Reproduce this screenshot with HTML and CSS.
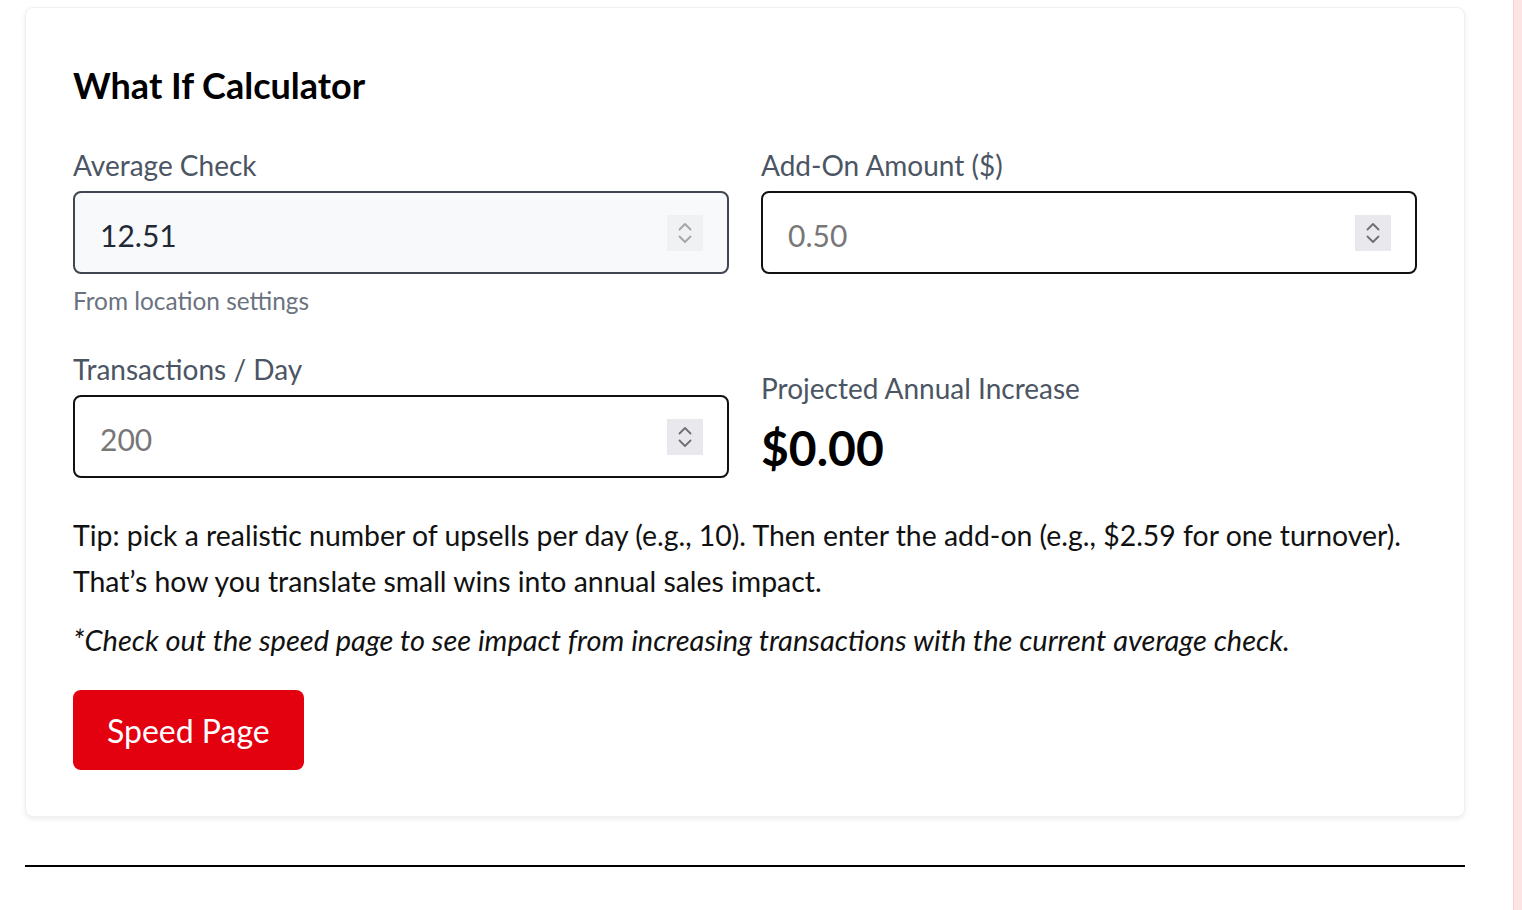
FILE: index.html
```html
<!DOCTYPE html>
<html lang="en">
<head>
<meta charset="utf-8">
<title>What If Calculator</title>
<link rel="stylesheet" href="styles.css">
</head>
<body>
<div class="layout">
  <main class="main">
    <section class="card">
      <h2 class="title">What If Calculator</h2>
      <div class="grid">
        <div class="cell">
          <label class="label">Average Check</label>
          <div class="field field-readonly">
            <input class="input input-value" type="text" value="12.51" readonly>
            <span class="spin spin-light">
              <svg width="36" height="36" viewBox="0 0 36 36"><path d="M12.5 14.5 L18 9 L23.5 14.5 M12.5 21.5 L18 27 L23.5 21.5" fill="none" stroke="#a3a3a8" stroke-width="1.8" stroke-linecap="round" stroke-linejoin="round"/></svg>
            </span>
          </div>
          <p class="helper">From location settings</p>
        </div>
        <div class="cell">
          <label class="label">Add-On Amount ($)</label>
          <div class="field">
            <input class="input" type="text" placeholder="0.50">
            <span class="spin">
              <svg width="36" height="36" viewBox="0 0 36 36"><path d="M12.5 14.5 L18 9 L23.5 14.5 M12.5 21.5 L18 27 L23.5 21.5" fill="none" stroke="#6e6e74" stroke-width="1.8" stroke-linecap="round" stroke-linejoin="round"/></svg>
            </span>
          </div>
        </div>
        <div class="cell">
          <label class="label">Transactions / Day</label>
          <div class="field">
            <input class="input" type="text" placeholder="200">
            <span class="spin">
              <svg width="36" height="36" viewBox="0 0 36 36"><path d="M12.5 14.5 L18 9 L23.5 14.5 M12.5 21.5 L18 27 L23.5 21.5" fill="none" stroke="#6e6e74" stroke-width="1.8" stroke-linecap="round" stroke-linejoin="round"/></svg>
            </span>
          </div>
        </div>
        <div class="cell cell-result">
          <span class="label result-label">Projected Annual Increase</span>
          <span class="result">$0.00</span>
        </div>
      </div>
      <p class="tip">Tip: pick a realistic number of upsells per day (e.g., 10). Then enter the add-on (e.g., $2.59 for one turnover). That’s how you translate small wins into annual sales impact.</p>
      <p class="note">*Check out the speed page to see impact from increasing transactions with the current average check.</p>
      <button class="btn" type="button">Speed Page</button>
    </section>
    <hr class="divider">
  </main>
  <aside class="side"></aside>
</div>
</body>
</html>
```

FILE: styles.css
```css
* { box-sizing: border-box; }

html, body {
  margin: 0;
  padding: 0;
  height: 100%;
  background: #ffffff;
  font-family: "Lato", "Open Sans", "Liberation Sans", sans-serif;
  color: #111111;
  overflow: hidden;
}

.layout {
  display: flex;
  height: 100vh;
}

.main {
  flex: 1;
  padding: 7px 48px 0 25px;
}

.side {
  width: 9px;
  background: #fde3e3;
  border-left: 1px solid #f6d2d2;
}

.card {
  background: #ffffff;
  border: 1px solid #f0f0f0;
  border-radius: 8px;
  box-shadow: 0 2px 5px rgba(0, 0, 0, 0.08);
  padding: 47px 47px 46px 47px;
}

.title {
  margin: 0 0 32px 0;
  font-size: 36px;
  line-height: 60px;
  font-weight: 700;
  color: #000000;
}

.grid {
  display: grid;
  grid-template-columns: 1fr 1fr;
  column-gap: 32px;
  row-gap: 34px;
}

.cell {
  display: flex;
  flex-direction: column;
  min-width: 0;
}

.cell-result {
  align-self: end;
}

.label {
  display: block;
  font-size: 28px;
  line-height: 36px;
  color: #4b5563;
  margin-bottom: 8px;
}

.result-label {
  margin-bottom: 12px;
}

.field {
  display: flex;
  align-items: center;
  height: 83px;
  border: 2px solid #111111;
  border-radius: 8px;
  background: #ffffff;
  padding: 0 24px 0 25px;
}

.field-readonly {
  background: #f8f9fb;
  border-color: #3f4652;
}

.input {
  flex: 1;
  min-width: 0;
  border: 0;
  outline: 0;
  background: transparent;
  font-family: inherit;
  font-size: 30px;
  color: #1f2937;
  padding: 5px 0 0 0;
}

.input::placeholder {
  color: #777777;
  opacity: 1;
}

.spin {
  display: flex;
  width: 36px;
  height: 36px;
  background: #e9e9ed;
}

.spin-light {
  background: #f0f1f3;
}

.helper {
  margin: 11px 0 0 0;
  font-size: 24.4px;
  line-height: 32px;
  color: #6b7280;
}

.result {
  font-size: 48px;
  line-height: 60px;
  font-weight: 700;
  color: #000000;
}

.tip {
  margin: 34px 0 0 0;
  font-size: 28.4px;
  line-height: 46px;
  color: #111111;
}

.note {
  margin: 13px 0 0 0;
  font-size: 29px;
  line-height: 46px;
  font-style: italic;
  color: #111111;
}

.btn {
  margin-top: 27px;
  height: 80px;
  padding: 0 34px;
  border: 0;
  border-radius: 8px;
  background: #e3000f;
  color: #ffffff;
  font-family: inherit;
  font-size: 32px;
}

.divider {
  margin: 48px 0 0 0;
  border: 0;
  border-top: 2px solid #000000;
  height: 0;
}
```
